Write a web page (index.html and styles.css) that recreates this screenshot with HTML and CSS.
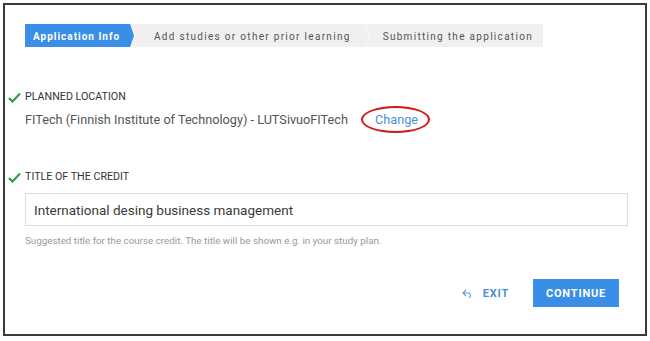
FILE: index.html
```html
<!DOCTYPE html>
<html lang="en">
<head>
  <meta charset="UTF-8">
  <title>Application</title>
  <link rel="stylesheet" href="styles.css">
</head>
<body>
  <div class="frame">
    <div class="steps">
      <div class="step active">Application Info</div>
      <div class="step middle">Add studies or other prior learning</div>
      <div class="step last">Submitting the application</div>
    </div>

    <div class="field">
      <div class="label">
        <svg class="check" width="13" height="11" viewBox="0 0 13 11"><path d="M1 6 L4.5 9.5 L12 1.5" fill="none" stroke="#3a9a4a" stroke-width="2.2"/></svg>
        PLANNED LOCATION
      </div>
      <div class="value">
        FITech (Finnish Institute of Technology) - LUTSivuoFITech
        <a class="change" href="#">Change</a>
      </div>
    </div>

    <div class="field second">
      <div class="label">
        <svg class="check" width="13" height="11" viewBox="0 0 13 11"><path d="M1 6 L4.5 9.5 L12 1.5" fill="none" stroke="#3a9a4a" stroke-width="2.2"/></svg>
        TITLE OF THE CREDIT
      </div>
      <input class="title-input" type="text" value="International desing business management">
      <div class="hint">Suggested title for the course credit. The title will be shown e.g. in your study plan.</div>
    </div>

    <div class="actions">
      <a class="exit" href="#">
        <svg width="11" height="9" viewBox="0 0 11 9"><path d="M4 1 L1 4 L4 7 M1 4 H7 a3 3 0 0 1 0 5" fill="none" stroke="#5b9be0" stroke-width="1.1"/></svg>
        EXIT
      </a>
      <button class="continue">CONTINUE</button>
    </div>
  </div>
</body>
</html>
```

FILE: styles.css
```css
body {
  margin: 0;
  background: #ffffff;
  font-family: 'Roboto', 'Noto Sans', sans-serif;
}

.frame {
  margin: 3px;
  height: 333px;
  border: 2px solid #3a3a3a;
  box-sizing: border-box;
  padding: 19px 18px 0 20px;
}

.steps {
  display: flex;
  height: 23px;
  width: 518px;
  background: #f0f0f0;
}

.step {
  display: flex;
  align-items: center;
  padding-top: 1px;
  font-size: 10px;
  letter-spacing: 1.3px;
  color: #555;
  position: relative;
}

.step.active {
  background: #3a8ee6;
  color: #fff;
  font-weight: bold;
  letter-spacing: 1px;
  padding: 1px 11px 0 8px;
  clip-path: polygon(0 0, calc(100% - 4px) 0, 100% 50%, calc(100% - 4px) 100%, 0 100%);
  width: 90px;
}

.step.middle {
  padding-left: 20px;
  padding-right: 20px;
}

.step.last {
  padding-left: 12px;
}

.step.middle::after {
  content: "";
  position: absolute;
  right: 0;
  top: 0;
  width: 6px;
  height: 23px;
  background: #fbfbfb;
  clip-path: polygon(0 0, 1px 0, 6px 50%, 1px 100%, 0 100%, 5px 50%);
}

.field {
  margin-top: 43px;
}

.field.second {
  margin-top: 42px;
}

.label {
  display: flex;
  align-items: center;
  margin-left: -17px;
  font-size: 10.7px;
  line-height: 14px;
  color: #333;
  gap: 4px;
}

.check {
  flex: none;
}

.value {
  margin-top: 8px;
  font-size: 12.7px;
  line-height: 16px;
  color: #555;
}

.change {
  margin-left: 24px;
  color: #4a8fd8;
  text-decoration: none;
  position: relative;
}

.change::after {
  content: "";
  position: absolute;
  left: -14px;
  right: -12px;
  top: -6px;
  bottom: -6px;
  border: 2px solid #d01818;
  border-radius: 50%;
}

.title-input {
  display: block;
  margin-top: 9px;
  width: 603px;
  height: 33px;
  box-sizing: border-box;
  border: 1px solid #ddd;
  padding: 0 8px;
  font-family: inherit;
  font-size: 13.5px;
  color: #3a3a3a;
}

.hint {
  margin-top: 9px;
  font-size: 9.8px;
  line-height: 12px;
  color: #999;
}

.actions {
  display: flex;
  justify-content: flex-end;
  align-items: center;
  gap: 24px;
  margin-top: 32px;
  padding-right: 8px;
}

.exit {
  display: flex;
  align-items: center;
  gap: 10px;
  color: #4a8fd8;
  text-decoration: none;
  font-size: 11px;
  font-weight: bold;
  letter-spacing: 0.8px;
}

.continue {
  width: 86px;
  height: 28px;
  border: none;
  background: #3a8ee6;
  color: #fff;
  font-family: inherit;
  font-size: 11px;
  font-weight: bold;
  letter-spacing: 0.8px;
}
```
